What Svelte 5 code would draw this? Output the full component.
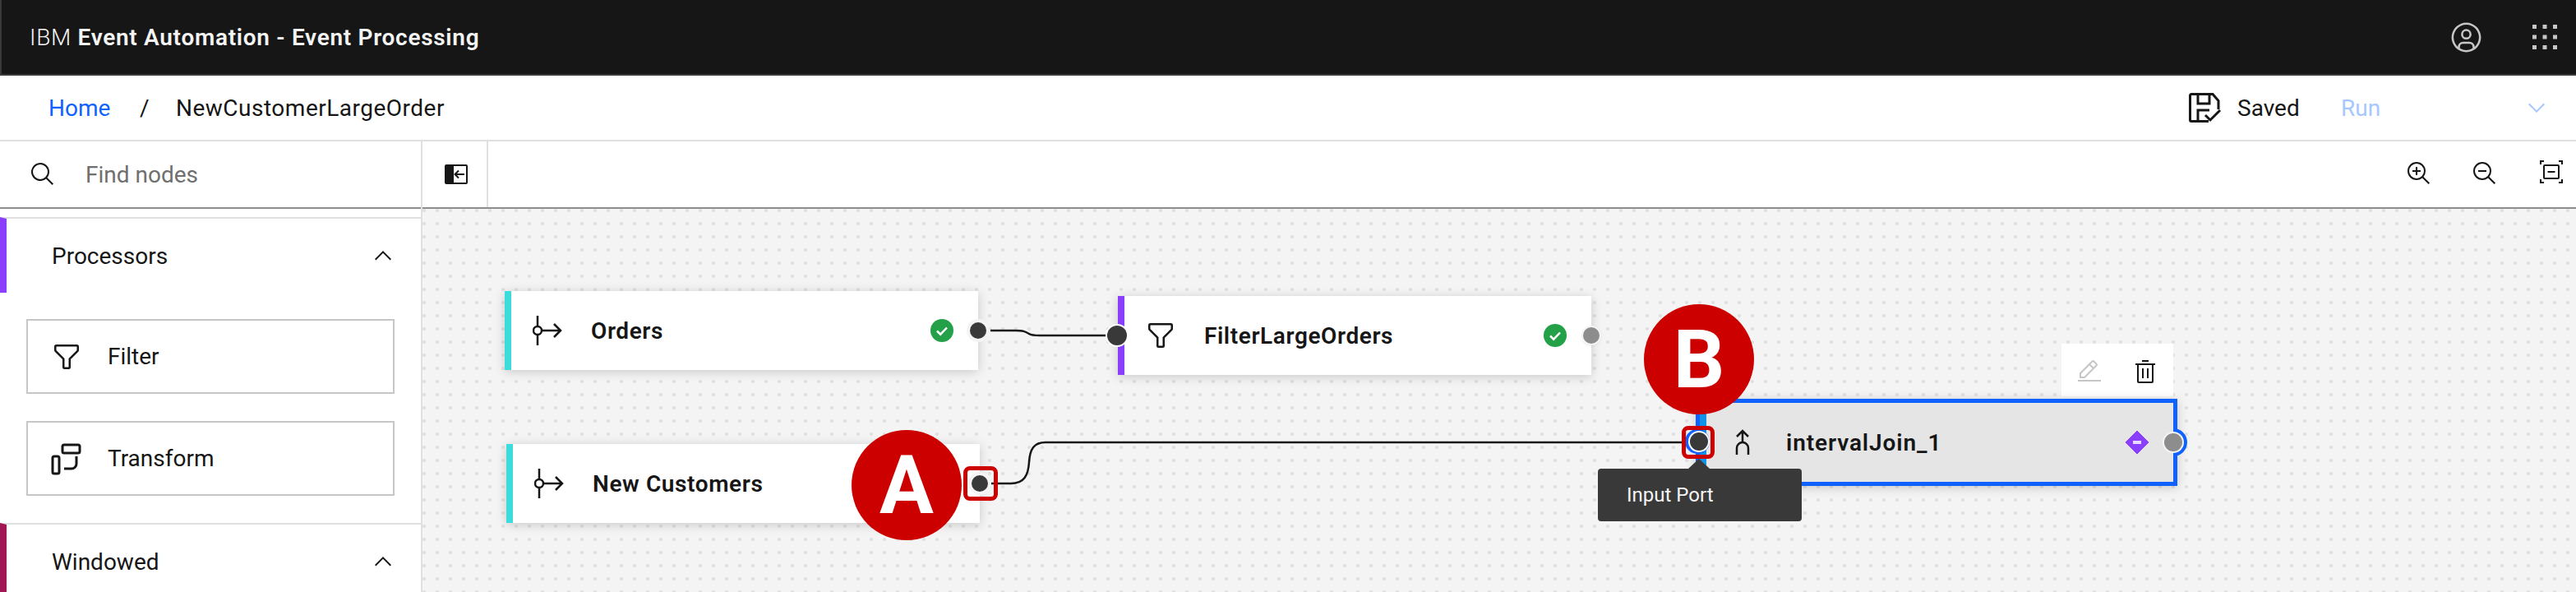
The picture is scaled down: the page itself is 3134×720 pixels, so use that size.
<script>
  const nodes = [
    { id: 'orders', label: 'Orders', x: 614, y: 354, kind: 'source', status: true, out: 'live' },
    { id: 'filter', label: 'FilterLargeOrders', x: 1360, y: 360, kind: 'filter', status: true, out: 'idle', input: true },
    { id: 'customers', label: 'New Customers', x: 616, y: 540, kind: 'source', status: false, out: 'live' }
  ];
  // canvas starts below the toolbar and right of the palette
  const ox = 514;
  const oy = 254;
</script>

<div class="page">
  <header class="topbar">
    <div class="brand">IBM <b>Event Automation - Event Processing</b></div>
    <svg class="avatar" viewBox="0 0 32 32" fill="currentColor">
      <path d="M16 8a5 5 0 1 0 5 5 5 5 0 0 0-5-5Zm0 8a3 3 0 1 1 3-3 3.0034 3.0034 0 0 1-3 3Z"/>
      <path d="M16 2a14 14 0 1 0 14 14A14.0158 14.0158 0 0 0 16 2ZM10 26.3765V25a3.0033 3.0033 0 0 1 3-3h6a3.0033 3.0033 0 0 1 3 3v1.3765a11.8989 11.8989 0 0 1-12 0Zm13.9925-1.4507A5.0016 5.0016 0 0 0 19 20H13a5.0016 5.0016 0 0 0-4.9925 4.9258 12 12 0 1 1 15.985 0Z"/>
    </svg>
    <svg class="switcher" viewBox="0 0 30 30" fill="currentColor">
      {#each [0, 12.5, 25] as row}
        {#each [0, 12.5, 25] as col}
          <rect x={col} y={row} width="5" height="5"/>
        {/each}
      {/each}
    </svg>
  </header>

  <nav class="crumbs">
    <a class="home" href="#home">Home</a>
    <span class="slash">/</span>
    <span class="flow-name">NewCustomerLargeOrder</span>
    <svg class="save-icon" viewBox="0 0 40 36" fill="none" stroke="currentColor" stroke-width="3">
      <path d="M24 34.5H3a1.5 1.5 0 0 1-1.5-1.5V3A1.5 1.5 0 0 1 3 1.5h26l7 8V20"/>
      <path d="M11 2v11h14V2"/>
      <path d="M11 34V21h14"/>
      <path d="M20 27l6 6 12-12"/>
    </svg>
    <span class="saved">Saved</span>
    <span class="run">Run</span>
    <svg class="run-caret" viewBox="0 0 32 32" fill="currentColor"><path d="M16 22 6 12l1.4-1.4 8.6 8.6 8.6-8.6L26 12z"/></svg>
  </nav>

  <div class="workspace">
    <aside class="palette">
      <div class="search">
        <svg class="search-icon" viewBox="0 0 32 32" fill="currentColor"><path d="M29 27.5859l-7.5521-7.5521a11.0177 11.0177 0 1 0-1.4141 1.4141L27.5859 29ZM4 13a9 9 0 1 1 9 9A9.01 9.01 0 0 1 4 13Z"/></svg>
        <span>Find nodes</span>
      </div>

      <section class="group processors">
        <div class="group-head">
          <span>Processors</span>
          <svg class="chev" viewBox="0 0 32 32" fill="currentColor"><path d="M16 10l10 10-1.4 1.4L16 12.8 7.4 21.4 6 20z"/></svg>
        </div>
      </section>
      <div class="tiles">
        <div class="tile">
          <svg class="tile-icon" viewBox="0 0 32 32" fill="currentColor"><path d="M18 28H14a2 2 0 0 1-2-2V18.41L4.59 11A2 2 0 0 1 4 9.59V6A2 2 0 0 1 6 4H26a2 2 0 0 1 2 2V9.59A2 2 0 0 1 27.41 11L20 18.41V26A2 2 0 0 1 18 28ZM6 6V9.59l8 8V26h4V17.59l8-8V6Z"/></svg>
          <span>Filter</span>
        </div>
        <div class="tile">
          <svg class="tile-icon" viewBox="0 0 40 40" fill="none" stroke="currentColor" stroke-width="3">
            <rect x="15" y="3" width="21" height="10" rx="2"/>
            <rect x="3" y="17" width="8" height="21" rx="2"/>
            <path d="M32 17v9a6 6 0 0 1-6 6h-9"/>
          </svg>
          <span>Transform</span>
        </div>
      </div>
      <section class="group windowed">
        <div class="group-head">
          <span>Windowed</span>
          <svg class="chev" viewBox="0 0 32 32" fill="currentColor"><path d="M16 10l10 10-1.4 1.4L16 12.8 7.4 21.4 6 20z"/></svg>
        </div>
      </section>
    </aside>

    <main class="editor">
      <div class="toolbar">
        <div class="collapse-cell">
          <svg class="collapse" viewBox="0 0 28 24">
            <path d="M2 0h9v24H2a2 2 0 0 1-2-2V2a2 2 0 0 1 2-2Z" fill="#161616"/>
            <rect x="10" y="1" width="17" height="22" rx="1" fill="none" stroke="#161616" stroke-width="2"/>
            <path d="M24 12H13M17 7.5 12.5 12l4.5 4.5" fill="none" stroke="#161616" stroke-width="2"/>
          </svg>
        </div>
        <div class="tools">
          <svg class="tool" viewBox="0 0 32 32" fill="currentColor">
            <path d="M18 12H14V8H12v4H8v2h4v4h2V14h4Z"/>
            <path d="M21.4479 20A10.856 10.856 0 0 0 24 13 11 11 0 1 0 13 24a10.856 10.856 0 0 0 7-2.5521L27.5859 29 29 27.5859ZM13 22a9 9 0 1 1 9-9A9.01 9.01 0 0 1 13 22Z"/>
          </svg>
          <svg class="tool" viewBox="0 0 32 32" fill="currentColor">
            <path d="M8 12H18V14H8Z"/>
            <path d="M21.4479 20A10.856 10.856 0 0 0 24 13 11 11 0 1 0 13 24a10.856 10.856 0 0 0 7-2.5521L27.5859 29 29 27.5859ZM13 22a9 9 0 1 1 9-9A9.01 9.01 0 0 1 13 22Z"/>
          </svg>
          <svg class="tool fit" viewBox="0 0 28 28" fill="none" stroke="currentColor" stroke-width="2">
            <path d="M1 5V1h4M23 1h4v4M27 23v4h-4M5 27H1v-4"/>
            <rect x="5" y="6" width="18" height="16" rx="1"/>
            <path d="M9.5 14h9"/>
          </svg>
        </div>
      </div>

      <div class="canvas">
        <svg class="wires" viewBox="{ox} {oy} 2620 466" fill="none" stroke="#161616" stroke-width="2.5">
          <path d="M1205 402H1235C1245 402 1247 403 1252 406C1255 408 1258 408 1265 408H1347"/>
          <path d="M1206 588H1230C1246 588 1251 578 1252 562C1253 546 1258 538 1272 538H2046"/>
        </svg>

        {#each nodes as node (node.id)}
          <div class="node {node.kind}" style="left: {node.x - ox}px; top: {node.y - oy}px;">
            {#if node.kind === 'source'}
              <svg class="node-icon" viewBox="0 0 36 36" fill="none" stroke="currentColor" stroke-width="2.5">
                <path d="M6 0v12M6 24v12"/>
                <circle cx="6" cy="18" r="5"/>
                <path d="M11 18h23M26 10l8 8-8 8"/>
              </svg>
            {:else}
              <svg class="node-icon funnel" viewBox="0 0 32 32" fill="currentColor"><path d="M18 28H14a2 2 0 0 1-2-2V18.41L4.59 11A2 2 0 0 1 4 9.59V6A2 2 0 0 1 6 4H26a2 2 0 0 1 2 2V9.59A2 2 0 0 1 27.41 11L20 18.41V26A2 2 0 0 1 18 28ZM6 6V9.59l8 8V26h4V17.59l8-8V6Z"/></svg>
            {/if}
            <span class="node-label">{node.label}</span>
            {#if node.status}
              <svg class="status" viewBox="0 0 28 28">
                <circle cx="14" cy="14" r="14" fill="#24a148"/>
                <path d="M8 14.5l4.2 4.2L20 10.5" fill="none" stroke="#fff" stroke-width="2.5"/>
              </svg>
            {/if}
            {#if node.input}
              <span class="port in"></span>
            {/if}
            <span class="port out {node.out}"></span>
          </div>
        {/each}

        <div class="node join">
          <div class="join-inner">
            <svg class="node-icon arrows" viewBox="0 0 18 32" fill="none" stroke="currentColor" stroke-width="2.5">
              <path d="M2 9l7-7 7 7M9 2v14"/>
              <path d="M2 31V23a7 7 0 0 1 7-7 7 7 0 0 1 7 7v8"/>
            </svg>
            <span class="node-label">intervalJoin_1</span>
            <svg class="diamond" viewBox="0 0 28 28">
              <path d="M14 0 28 14 14 28 0 14Z" fill="#8a3ffc" stroke="#8a3ffc" stroke-linejoin="round"/>
              <rect x="9" y="12" width="10" height="4" fill="#e8daff"/>
            </svg>
          </div>
          <span class="port-arc"></span>
          <span class="port out idle join-out"></span>
        </div>

        <div class="node-actions">
          <svg class="edit" viewBox="0 0 32 32" fill="currentColor">
            <path d="M2 26H30V28H2zM25.4 9c.8-.8.8-2 0-2.8 0 0 0 0 0 0l-3.6-3.6c-.8-.8-2-.8-2.8 0 0 0 0 0 0 0l-15 15V24h6.4L25.4 9zM20.4 4L24 7.6l-3 3L17.4 7 20.4 4zM6 22v-3.6l10-10 3.6 3.6-10 10H6z"/>
          </svg>
          <svg class="trash" viewBox="0 0 32 32" fill="currentColor">
            <path d="M12 12H14V24H12ZM18 12h2V24H18Z"/>
            <path d="M4 6V8H6V28a2 2 0 0 0 2 2H24a2 2 0 0 0 2-2V8h2V6ZM8 28V8H24V28Z"/>
            <path d="M12 2H20V4H12Z"/>
          </svg>
        </div>

        <!-- Port B and its tooltip -->
        <span class="join-in"></span>
        <div class="tooltip"><span class="caret"></span>Input Port</div>

        <!-- Callouts -->
        <span class="mark mark-a"></span>
        <span class="mark mark-b"></span>
        <span class="badge badge-a">A</span>
        <span class="badge badge-b">B</span>
      </div>
    </main>
  </div>
</div>

<style>
  :global(body) {
    margin: 0;
    background: #fff;
  }

  .page {
    width: 3134px;
    height: 720px;
    overflow: hidden;
    display: flex;
    flex-direction: column;
    font-family: Roboto, "Open Sans", sans-serif;
    font-size: 28px;
    color: #161616;
  }

  /* ── Top bar ── */
  .topbar {
    flex: 0 0 92px;
    box-sizing: border-box;
    display: flex;
    align-items: center;
    background: #161616;
    border-bottom: 2px solid #393939;
    border-left: 2px solid #393939;
    padding-left: 34px;
    color: #f4f4f4;
  }

  .brand { flex: 1; font-size: 28px; white-space: nowrap; font-weight: 300; letter-spacing: 0.7px; }
  .brand b { font-weight: 600; }

  .avatar {
    width: 41px;
    height: 41px;
    margin-right: 60px;
    color: #c6c6c6;
  }

  .switcher {
    width: 30px;
    height: 30px;
    margin-right: 23px;
    color: #c6c6c6;
  }

  /* ── Breadcrumb row ── */
  .crumbs {
    flex: 0 0 80px;
    box-sizing: border-box;
    display: flex;
    align-items: center;
    border-bottom: 2px solid #e0e0e0;
    padding-left: 59px;
  }

  .home { color: #0f62fe; text-decoration: none; width: 111px; }
  .slash { width: 44px; }
  .flow-name { flex: 1; letter-spacing: 0.5px; }

  .save-icon { width: 40px; height: 36px; margin-right: 19px; color: #161616; }
  .saved { width: 126px; }
  .run { width: 222px; color: #a6c8ff; }
  .run-caret { width: 32px; height: 32px; margin-right: 32px; color: #a6c8ff; }

  /* ── Workspace ── */
  .workspace {
    flex: 1;
    display: flex;
    min-height: 0;
  }

  .palette {
    flex: 0 0 512px;
    display: flex;
    flex-direction: column;
  }

  .search {
    flex: 0 0 82px;
    box-sizing: border-box;
    display: flex;
    align-items: center;
    gap: 36px;
    padding-left: 36px;
    border-bottom: 2px solid #8d8d8d;
    color: #6f6f6f;
  }

  .search-icon { width: 32px; height: 32px; color: #161616; }

  .group {
    border-top: 2px solid #e0e0e0;
    border-left: 8px solid;
  }

  .processors { margin-top: 10px; border-left-color: #8a3ffc; }
  .windowed { border-left-color: #9f1853; }

  .group-head {
    height: 90px;
    display: flex;
    align-items: center;
    justify-content: space-between;
    padding: 0 30px 0 55px;
  }

  .chev { width: 32px; height: 32px; }

  .tiles {
    display: flex;
    flex-direction: column;
    gap: 33px;
    padding: 32px 32px 33px;
  }

  .tile {
    height: 91px;
    box-sizing: border-box;
    border: 2px solid #c6c6c6;
    display: flex;
    align-items: center;
    gap: 30px;
    padding-left: 27px;
  }

  .tile-icon { width: 40px; height: 40px; }

  /* ── Editor ── */
  .editor {
    flex: 1;
    display: flex;
    flex-direction: column;
    min-width: 0;
    border-left: 2px solid #e0e0e0;
  }

  .toolbar {
    flex: 0 0 82px;
    box-sizing: border-box;
    display: flex;
    align-items: center;
    border-bottom: 2px solid #8d8d8d;
  }

  .collapse-cell {
    width: 80px;
    height: 80px;
    box-sizing: border-box;
    border-right: 2px solid #e0e0e0;
    display: flex;
    align-items: center;
    justify-content: center;
    padding-left: 4px;
  }

  .collapse { width: 28px; height: 24px; }

  .tools {
    flex: 1;
    display: flex;
    justify-content: flex-end;
    gap: 48px;
    padding-right: 16px;
    margin-top: -3px;
  }

  .tool { width: 32px; height: 32px; }
  .fit { width: 28px; height: 28px; margin-left: 3px; }

  .canvas {
    flex: 1;
    position: relative;
    background-color: #f4f4f4;
    background-image: radial-gradient(circle at 2px 2px, #e0e0e0 1.6px, transparent 2.3px);
    background-size: 16px 16px;
  }

  .wires {
    position: absolute;
    inset: 0;
    width: 2620px;
    height: 466px;
  }

  /* ── Nodes ── */
  .node {
    position: absolute;
    width: 576px;
    height: 96px;
    box-sizing: border-box;
    display: flex;
    align-items: center;
    background: #fff;
    box-shadow: 0 2px 12px rgba(0, 0, 0, 0.18);
    border-left: 8px solid;
  }

  .source { border-left-color: #3ddbd9; }
  .filter { border-left-color: #8a3ffc; }

  .node-icon { flex: none; width: 36px; height: 36px; margin-left: 26px; }
  .funnel { width: 40px; height: 40px; margin-left: 24px; }

  .node-label {
    margin-left: 35px;
    font-weight: 600;
    white-space: nowrap;
    letter-spacing: 0.6px;
  }

  .filter .node-label { margin-left: 33px; }

  .status {
    position: absolute;
    right: 30px;
    top: 34px;
    width: 28px;
    height: 28px;
  }

  .port {
    position: absolute;
    width: 20px;
    height: 20px;
    border-radius: 50%;
    top: 38px;
    box-shadow: 0 0 0 2px #fff;
  }

  .port.in { left: -21px; width: 24px; height: 24px; top: 36px; background: #393939; }
  .port.out { right: -10px; }
  .port.live { background: #393939; box-shadow: 0 0 0 4px #f4f4f4; }
  .port.idle { background: #8d8d8d; box-shadow: 0 0 0 2px #f4f4f4, 0 1px 4px rgba(0, 0, 0, 0.2); }

  /* ── Selected join node ── */
  .join {
    left: 1549px;
    top: 231px;
    width: 586px;
    height: 106px;
    border: 5px solid #0f62fe;
    background: #e5e5e5;
    z-index: 1;
  }

  .join-inner {
    flex: 1;
    height: 100%;
    display: flex;
    align-items: center;
    border-left: 8px solid #1192e8;
  }

  .arrows { width: 18px; height: 32px; margin-left: 35px; }
  .join .node-label { margin-left: 44px; letter-spacing: 0.9px; }

  .diamond {
    position: absolute;
    left: 518px;
    top: 34px;
    width: 28px;
    height: 28px;
  }

  .port-arc {
    position: absolute;
    right: -17px;
    top: 31px;
    width: 34px;
    height: 34px;
    border-radius: 50%;
    background: #0f62fe;
    clip-path: inset(0 0 0 17px);
  }

  .port.out.join-out {
    right: -11px;
    top: 37px;
    width: 22px;
    height: 22px;
    box-shadow: 0 0 0 2px #f4f4f4;
  }

  .node-actions {
    position: absolute;
    left: 1994px;
    top: 164px;
    width: 136px;
    height: 64px;
    background: #fff;
    display: flex;
    align-items: center;
    gap: 36px;
    padding: 4px 0 0 18px;
    box-sizing: border-box;
  }

  .edit { width: 32px; height: 32px; color: #c6c6c6; }
  .trash { width: 32px; height: 32px; }

  .join-in {
    position: absolute;
    left: 1542px;
    top: 272px;
    width: 22px;
    height: 22px;
    border-radius: 50%;
    background: #393939;
    box-shadow: 0 0 0 2px #fff, -2px 0 0 4px #0f62fe;
    z-index: 2;
  }

  /* ── Tooltip ── */
  .tooltip {
    position: absolute;
    left: 1430px;
    top: 316px;
    width: 248px;
    height: 64px;
    box-sizing: border-box;
    padding-left: 35px;
    display: flex;
    align-items: center;
    background: #393939;
    border-radius: 4px;
    color: #f4f4f4;
    font-size: 24px;
    z-index: 3;
  }

  .caret {
    position: absolute;
    left: 110px;
    top: -12px;
    width: 0;
    height: 0;
    border-left: 13px solid transparent;
    border-right: 13px solid transparent;
    border-bottom: 12px solid #393939;
  }

  /* ── Red callouts ── */
  .mark {
    position: absolute;
    box-sizing: border-box;
    width: 42px;
    height: 42px;
    border: 5px solid #cd0000;
    border-radius: 8px;
    z-index: 4;
  }

  .mark-a { left: 658px; top: 313px; }
  .mark-b { left: 1532px; top: 264px; width: 40px; height: 40px; }

  .badge {
    position: absolute;
    width: 134px;
    height: 134px;
    border-radius: 50%;
    background: #cd0000;
    color: #fff;
    display: flex;
    align-items: center;
    justify-content: center;
    font-family: Roboto, sans-serif;
    font-weight: 700;
    font-size: 98px;
    z-index: 4;
  }

  .badge-a { left: 522px; top: 269px; }
  .badge-b { left: 1486px; top: 116px; }
</style>
